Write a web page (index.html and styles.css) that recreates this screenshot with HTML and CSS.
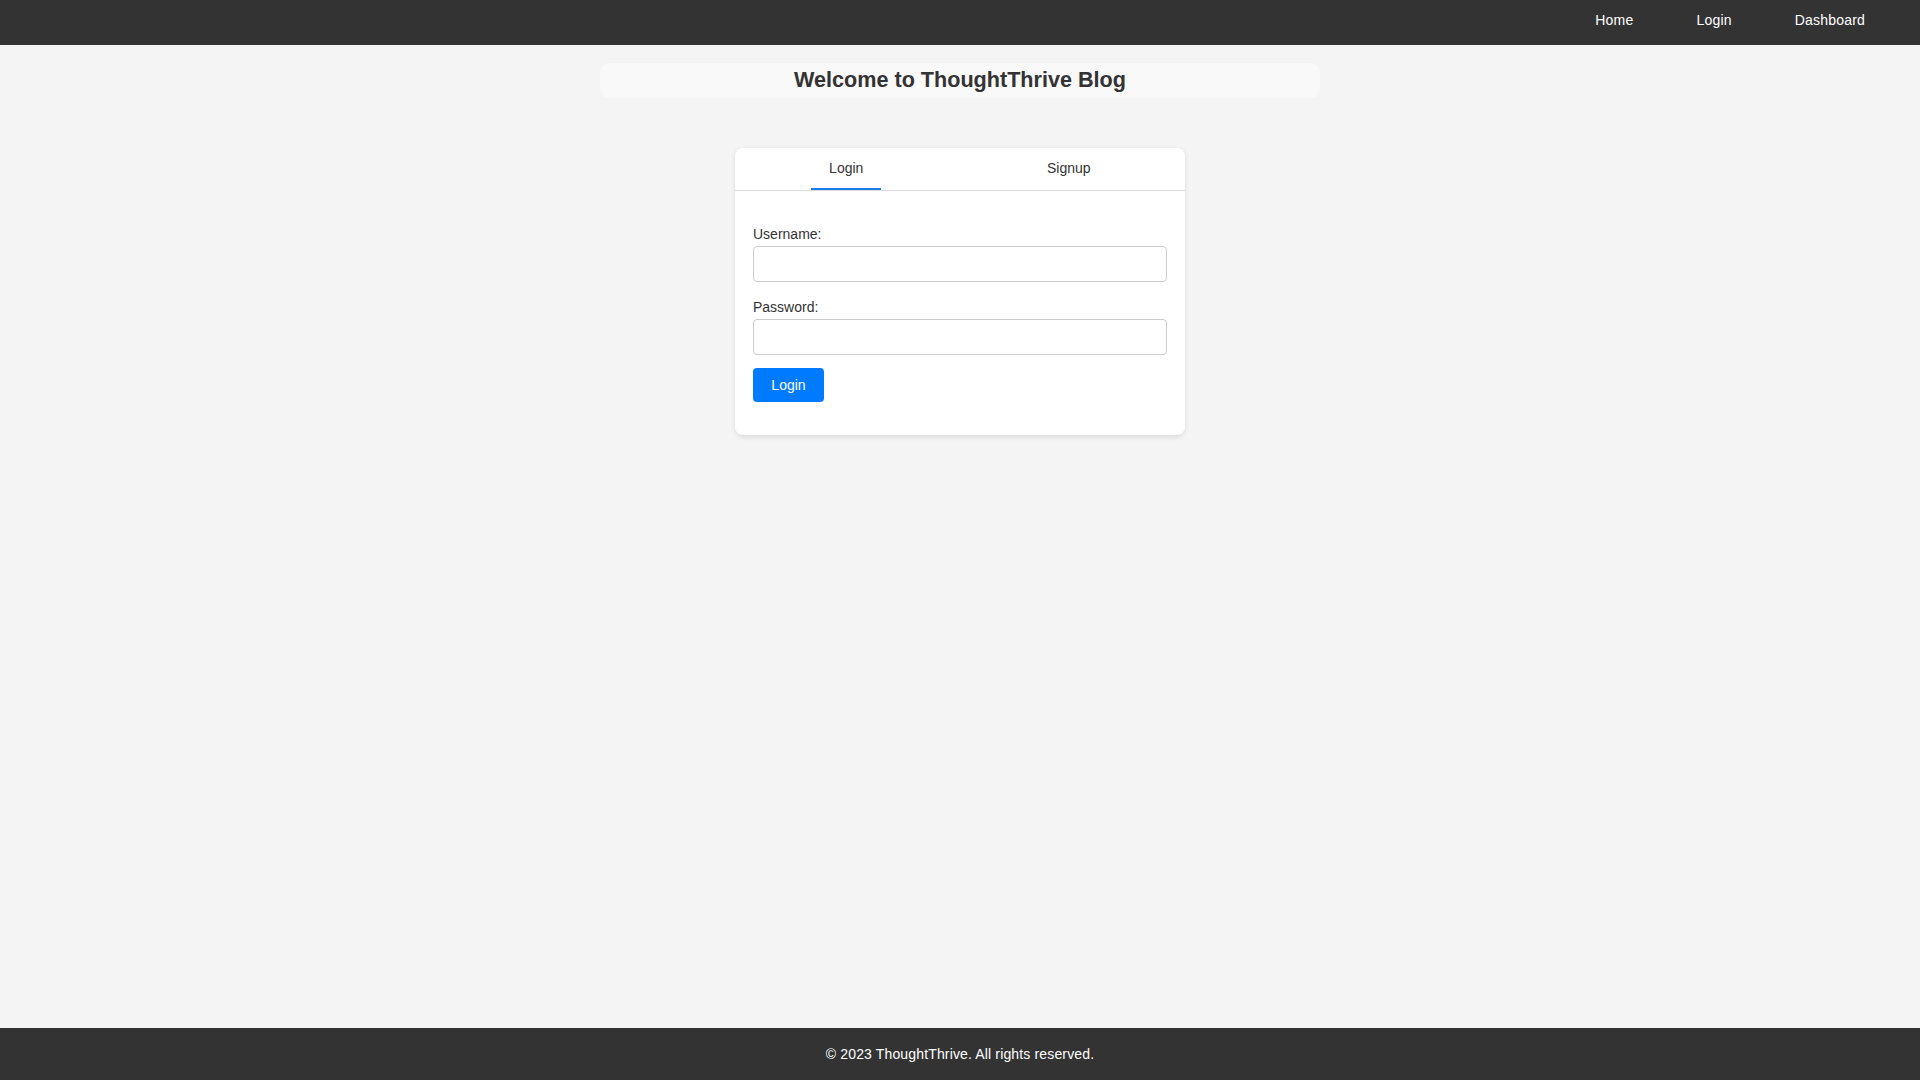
FILE: index.html
```html
<!DOCTYPE html>
<html lang="en">
<head>
<meta charset="utf-8">
<title>ThoughtThrive Blog</title>
<link rel="stylesheet" href="styles.css">
</head>
<body>
<div class="page">
  <header class="topbar">
    <nav class="nav">
      <a href="#" class="nav-link">Home</a>
      <a href="#" class="nav-link">Login</a>
      <a href="#" class="nav-link">Dashboard</a>
    </nav>
  </header>
  <main class="main">
    <h1 class="welcome">Welcome to ThoughtThrive Blog</h1>
    <section class="card">
      <div class="tabs">
        <div class="tab-cell"><button class="tab active">Login</button></div>
        <div class="tab-cell"><button class="tab">Signup</button></div>
      </div>
      <form class="form">
        <label class="label" for="username">Username:</label>
        <input class="input" id="username" type="text">
        <label class="label" for="password">Password:</label>
        <input class="input" id="password" type="password">
        <button type="button" class="btn">Login</button>
      </form>
    </section>
  </main>
  <footer class="footer">© 2023 ThoughtThrive. All rights reserved.</footer>
</div>
</body>
</html>
```

FILE: styles.css
```css
* { box-sizing: border-box; }
html, body { margin: 0; padding: 0; }
body {
  font-family: "Liberation Sans", Arial, sans-serif;
  font-size: 14px;
  background: #f4f4f4;
  color: #333;
}
.page {
  min-height: 1080px;
  display: flex;
  flex-direction: column;
}
.topbar {
  background: #333;
  height: 45px;
  display: flex;
  justify-content: flex-end;
  padding: 12px 55px 0 0;
}
.nav {
  display: flex;
  gap: 63px;
  height: 16px;
}
.nav-link {
  color: #fff;
  text-decoration: none;
  line-height: 16px;
  font-size: 14px;
  letter-spacing: 0.2px;
}
.main {
  flex: 1;
  display: flex;
  flex-direction: column;
  align-items: center;
  padding-top: 18px;
}
.welcome {
  margin: 0;
  width: 720px;
  height: 35px;
  padding: 4px 0 6px;
  background: #f9f9f9;
  border-radius: 10px;
  text-align: center;
  font-size: 21.6px;
  line-height: 25px;
  font-weight: bold;
  color: #333;
}
.card {
  margin-top: 50px;
  width: 450px;
  background: #fff;
  border-radius: 8px;
  box-shadow: 0 2px 5px rgba(0,0,0,0.1);
  overflow: hidden;
}
.tabs {
  display: flex;
  border-bottom: 1px solid #ddd;
  height: 43px;
  padding-right: 5px;
}
.tab-cell {
  flex: 1;
  display: flex;
  justify-content: center;
}
.tab {
  font-family: inherit;
  font-size: 14px;
  color: #333;
  background: none;
  border: none;
  border-bottom: 2px solid transparent;
  padding: 12px 18px 12px;
  line-height: 16px;
  height: 42px;
  cursor: pointer;
}
.tab.active { border-bottom-color: #1a7ce8; }
.form {
  display: flex;
  flex-direction: column;
  align-items: flex-start;
  padding: 35px 18px 33px;
}
.label {
  display: block;
  line-height: 16px;
  margin-bottom: 4px;
  color: #333;
}
.input {
  width: 100%;
  height: 36px;
  border: 1px solid #ccc;
  border-radius: 4px;
  margin: 0 0 17px;
  font-family: inherit;
  font-size: 14px;
  background: #fff;
}
#password { margin-bottom: 13px; }
.btn {
  font-family: inherit;
  font-size: 14px;
  color: #fff;
  background: #007bff;
  border: none;
  border-radius: 4px;
  height: 34px;
  width: 71px;
  padding: 0;
  line-height: 34px;
  cursor: pointer;
}
.footer {
  background: #333;
  color: #fff;
  text-align: center;
  height: 52px;
  line-height: 16px;
  padding-top: 18px;
  font-size: 14px;
  letter-spacing: 0.15px;
}
```
